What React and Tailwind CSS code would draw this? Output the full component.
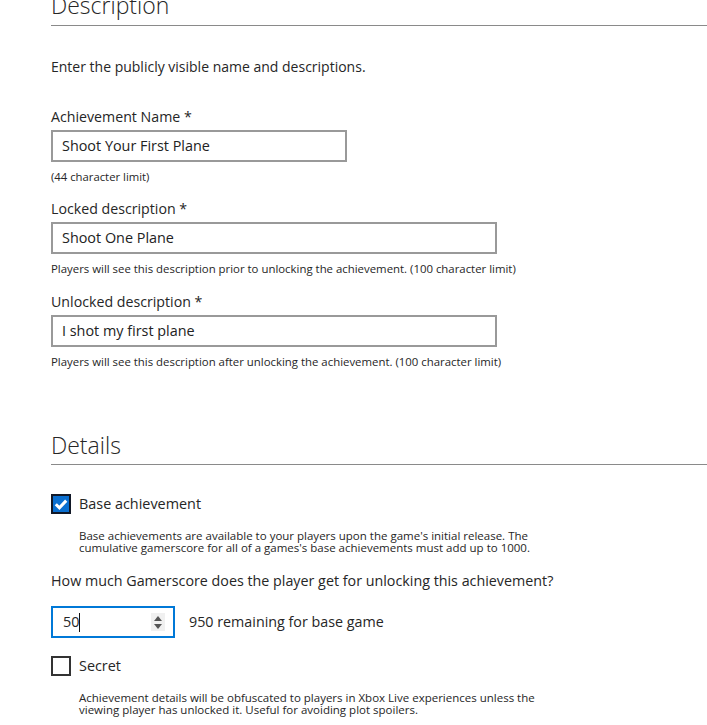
import React from "react";

function TextInput({ value, width }) {
  return (
    <div
      className="mt-[3px] h-[32px] border-2 border-[#999999] bg-white flex items-center pl-[9px] text-[14.4px] text-[#222]"
      style={{ width }}
    >
      {value}
    </div>
  );
}

export default function App() {
  return (
    <div
      className="bg-white w-[707px] h-[725px] overflow-hidden text-[#262626]"
      style={{ fontFamily: '"Open Sans", "Noto Sans", sans-serif' }}
    >
      <div className="pl-[51px]">
        {/* Description header */}
        <div className="-mt-[11px] h-[37px] border-b border-[#8a8a8a] text-[23px] font-light leading-[32px]">
          Description
        </div>
        <div className="mt-[31px] text-[14px] leading-[20px]">
          Enter the publicly visible name and descriptions.
        </div>

        <div className="mt-[30px] text-[14.2px] leading-[20px]">Achievement Name *</div>
        <TextInput value="Shoot Your First Plane" width={296} />
        <div className="mt-[8px] text-[11.3px] leading-[14px]">(44 character limit)</div>

        <div className="mt-[15px] text-[14.2px] leading-[20px]">Locked description *</div>
        <TextInput value="Shoot One Plane" width={446} />
        <div className="mt-[8px] text-[11.4px] leading-[14px]">
          Players will see this description prior to unlocking the achievement. (100 character limit)
        </div>

        <div className="mt-[16px] text-[14.2px] leading-[20px]">Unlocked description *</div>
        <TextInput value="I shot my first plane" width={446} />
        <div className="mt-[8px] text-[11.4px] leading-[14px]">
          Players will see this description after unlocking the achievement. (100 character limit)
        </div>

        {/* Details header */}
        <div className="mt-[60px] h-[36px] border-b border-[#8a8a8a] text-[23px] font-light leading-[32px]">
          Details
        </div>

        <div className="mt-[29px] flex items-center h-[20px] gap-[8px]">
          <div className="w-[20px] h-[20px] border-2 border-[#111827] bg-[#0a6fd0] flex items-center justify-center">
            <svg width="14" height="14" viewBox="0 0 14 14">
              <path d="M1.8 7.2 L5.4 10.8 L12.2 3.6" fill="none" stroke="white" strokeWidth="3" />
            </svg>
          </div>
          <span className="text-[14.4px] leading-[20px]">Base achievement</span>
        </div>
        <div className="mt-[16px] ml-[28px] w-[470px] text-[11.5px] leading-[12px]">
          Base achievements are available to your players upon the game's initial release. The
          cumulative gamerscore for all of a games's base achievements must add up to 1000.
        </div>

        <div className="mt-[17px] text-[14.3px] leading-[20px]">
          How much Gamerscore does the player get for unlocking this achievement?
        </div>

        <div className="mt-[15px] flex items-center gap-[14px]">
          <div className="w-[124px] h-[32px] border-2 border-[#0078d7] flex items-center pl-[10px] pr-[8px]">
            <span className="text-[14.4px] leading-[20px]">50</span>
            <span className="w-px h-[19px] bg-[#111]" />
            <div className="ml-auto w-[14px] h-[18px] bg-[#f0f0f0] flex flex-col items-center justify-center gap-[3px]">
              <svg width="8" height="5" viewBox="0 0 8 5">
                <path d="M0 5 L4 0 L8 5 Z" fill="#555" />
              </svg>
              <svg width="8" height="5" viewBox="0 0 8 5">
                <path d="M0 0 L4 5 L8 0 Z" fill="#555" />
              </svg>
            </div>
          </div>
          <span className="text-[14.3px] leading-[20px]">950 remaining for base game</span>
        </div>

        <div className="mt-[18px] flex items-center h-[20px] gap-[8px]">
          <div className="w-[20px] h-[20px] border-2 border-[#333]" />
          <span className="text-[14.4px] leading-[20px]">Secret</span>
        </div>
        <div className="mt-[16px] ml-[28px] w-[470px] text-[11.5px] leading-[12px]">
          Achievement details will be obfuscated to players in Xbox Live experiences unless the
          viewing player has unlocked it. Useful for avoiding plot spoilers.
        </div>
      </div>
    </div>
  );
}
